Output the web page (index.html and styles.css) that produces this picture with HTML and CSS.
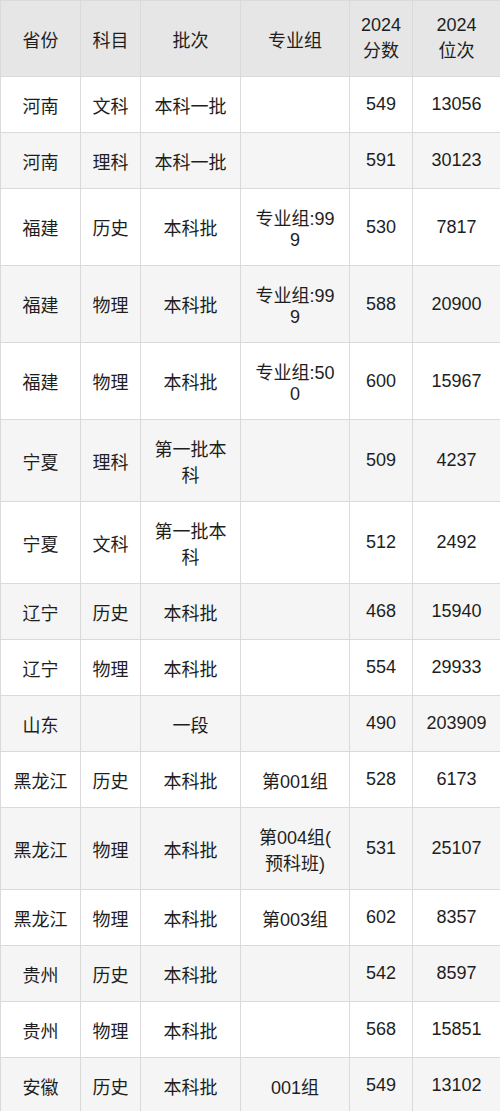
FILE: index.html
```html
<!DOCTYPE html>
<html lang="zh-CN">
<head>
<meta charset="utf-8">
<title>2024 录取分数</title>
<link rel="stylesheet" href="styles.css">
</head>
<body>
<table class="score-table">
  <colgroup>
    <col class="c-prov"><col class="c-subj"><col class="c-batch"><col class="c-group"><col class="c-score"><col class="c-rank">
  </colgroup>
  <thead>
    <tr><th>省份</th><th>科目</th><th>批次</th><th class="group">专业组</th><th>2024<br>分数</th><th>2024<br>位次</th></tr>
  </thead>
  <tbody>
    <tr><td>河南</td><td>文科</td><td>本科一批</td><td class="group"></td><td>549</td><td>13056</td></tr>
    <tr><td>河南</td><td>理科</td><td>本科一批</td><td class="group"></td><td>591</td><td>30123</td></tr>
    <tr><td>福建</td><td>历史</td><td>本科批</td><td class="group">专业组:999</td><td>530</td><td>7817</td></tr>
    <tr><td>福建</td><td>物理</td><td>本科批</td><td class="group">专业组:999</td><td>588</td><td>20900</td></tr>
    <tr><td>福建</td><td>物理</td><td>本科批</td><td class="group">专业组:500</td><td>600</td><td>15967</td></tr>
    <tr><td>宁夏</td><td>理科</td><td class="batch">第一批本科</td><td class="group"></td><td>509</td><td>4237</td></tr>
    <tr><td>宁夏</td><td>文科</td><td class="batch">第一批本科</td><td class="group"></td><td>512</td><td>2492</td></tr>
    <tr><td>辽宁</td><td>历史</td><td>本科批</td><td class="group"></td><td>468</td><td>15940</td></tr>
    <tr><td>辽宁</td><td>物理</td><td>本科批</td><td class="group"></td><td>554</td><td>29933</td></tr>
    <tr><td>山东</td><td></td><td>一段</td><td class="group"></td><td>490</td><td>203909</td></tr>
    <tr><td>黑龙江</td><td>历史</td><td>本科批</td><td class="group">第001组</td><td>528</td><td>6173</td></tr>
    <tr><td>黑龙江</td><td>物理</td><td>本科批</td><td class="group">第004组(预科班)</td><td>531</td><td>25107</td></tr>
    <tr><td>黑龙江</td><td>物理</td><td>本科批</td><td class="group">第003组</td><td>602</td><td>8357</td></tr>
    <tr><td>贵州</td><td>历史</td><td>本科批</td><td class="group"></td><td>542</td><td>8597</td></tr>
    <tr><td>贵州</td><td>物理</td><td>本科批</td><td class="group"></td><td>568</td><td>15851</td></tr>
    <tr><td>安徽</td><td>历史</td><td>本科批</td><td class="group">001组</td><td>549</td><td>13102</td></tr>
  </tbody>
</table>
</body>
</html>
```
FILE: styles.css
```css
html, body {
  margin: 0;
  padding: 0;
  background: #ffffff;
}

.score-table {
  width: 500px;
  border-collapse: collapse;
  table-layout: fixed;
  font-family: "Liberation Sans", "Noto Sans CJK SC", sans-serif;
  font-size: 18px;
  color: #1e1e1e;
}

.c-prov { width: 80px; }
.c-subj { width: 60px; }
.c-batch { width: 100px; }
.c-group { width: 109px; }
.c-score { width: 63px; }
.c-rank { width: 88px; }

.score-table th,
.score-table td {
  border: 1px solid #dadada;
  padding: 14.5px 2px;
  text-align: center;
  vertical-align: middle;
  font-weight: normal;
  white-space: normal;
}

.score-table thead th {
  padding-top: 14px;
  padding-bottom: 14px;
  background: #e6e6e6;
}

.score-table .batch {
  padding-left: 8px;
  padding-right: 8px;
}

.score-table .group {
  padding-left: 12px;
  padding-right: 12px;
  line-break: anywhere;
  word-break: break-all;
}

.score-table tbody tr:nth-child(even) td {
  background: #f5f5f5;
}

.score-table tbody tr:nth-child(odd) td {
  background: #ffffff;
}
```
